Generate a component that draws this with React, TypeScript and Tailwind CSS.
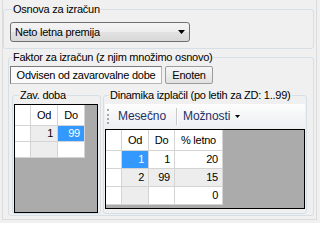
import type { ReactNode } from 'react';

type Tone = 'w' | 'g' | 's';

interface GridCell {
  v?: string;
  t: Tone;
}

const toneCls: Record<Tone, string> = {
  w: 'bg-white text-black',
  g: 'bg-[#ededed] text-black',
  s: 'bg-[#3399ff] text-white',
};

interface DataGridProps {
  size: string;
  widths: string[];
  headers: string[];
  rows: GridCell[][];
  rowH: string;
}

function DataGrid({ size, widths, headers, rows, rowH }: DataGridProps) {
  return (
    <div className={`${size} border border-black bg-[#ababab] overflow-hidden`}>
      <div className="flex h-[21px]">
        {widths.map((w, i) => (
          <div
            key={i}
            className={`${w} h-full shrink-0 flex items-center justify-center bg-white border-r border-b border-[#d4d4d4]`}
          >
            {headers[i]}
          </div>
        ))}
      </div>
      {rows.map((row, r) => (
        <div key={r} className={`flex ${rowH}`}>
          <div className={`${widths[0]} h-full shrink-0 bg-white border-r border-b border-[#d4d4d4]`} />
          {row.map((cell, i) => (
            <div
              key={i}
              className={`${widths[i + 1]} ${toneCls[cell.t]} h-full shrink-0 flex items-center justify-end pr-[4px] border-r border-b border-[#d4d4d4]`}
            >
              {cell.v}
            </div>
          ))}
        </div>
      ))}
    </div>
  );
}

function Group({ className, legend, legendCls, children }: { className: string; legend: string; legendCls: string; children: ReactNode }) {
  return (
    <fieldset className={`border border-[#d5dfe5] rounded-[3px] ${className}`}>
      <legend className={`px-[1px] ${legendCls}`}>{legend}</legend>
      {children}
    </fieldset>
  );
}

function Arrow({ w, h }: { w: number; h: number }) {
  return (
    <svg width={w} height={h} viewBox={`0 0 ${w} ${h}`} className="shrink-0">
      <polygon points={`0,0 ${w},0 ${w / 2},${h}`} fill="#000" />
    </svg>
  );
}

export default function App() {
  return (
    <div className="w-[320px] h-[223px] bg-[#f0f0f0] overflow-hidden text-[11px] leading-[13px] tracking-[-0.25px] text-black font-['Liberation_Sans',Arial,sans-serif]">
      <div className="ml-[2px] w-[315px] h-[220px] border-x border-b border-[#dcdcdc] pt-[3px]">
        <Group className="w-[311px] h-[46px] pl-[6px] pt-[6px]" legend="Osnova za izračun" legendCls="ml-[2px]">
          <div className="flex items-center justify-between w-[180px] h-[20px] rounded-[3px] border border-[#707070] pl-[4px] pr-[4px] bg-[linear-gradient(#f4f4f4_0%,#ededed_50%,#e2e2e2_50%,#d8d8d8_100%)]">
            <span>Neto letna premija</span>
            <Arrow w={7} h={4} />
          </div>
        </Group>

        <Group
          className="ml-[5px] mt-[2px] w-[306px] h-[165px] pl-[1px] pt-[2px]"
          legend="Faktor za izračun (z njim množimo osnovo)"
          legendCls="ml-[2px]"
        >
          <div className="flex gap-[3px] h-[18px]">
            <div className="w-[152px] h-full flex items-center justify-center bg-[#fbfbfb] border border-[#b5b5b5] border-t-[#7a7a7a] border-l-[#7a7a7a]">
              Odvisen od zavarovalne dobe
            </div>
            <div className="w-[48px] h-full flex items-center justify-center rounded-[2px] border border-[#9c9c9c] bg-linear-to-b from-[#f7f7f7] to-[#e1e1e1]">
              Enoten
            </div>
          </div>

          <div className="flex gap-[2px] ml-[2px] mt-[5px]">
            <Group className="w-[89px] h-[125px] pl-[1px] pr-[2px] pt-[2px]" legend="Zav. doba" legendCls="ml-[5px]">
              <DataGrid
                size="w-[84px] h-[109px]"
                widths={['w-[16px]', 'w-[27px]', 'w-[27px]']}
                headers={['', 'Od', 'Do']}
                rowH="h-[16px]"
                rows={[
                  [{ v: '1', t: 'g' }, { v: '99', t: 's' }],
                  [{ t: 'g' }, { t: 'w' }],
                ]}
              />
            </Group>

            <Group
              className="w-[204px] h-[125px] pl-[1px] pr-[1px] pt-[2px]"
              legend="Dinamika izplačil (po letih za ZD: 1..99)"
              legendCls="ml-[4px]"
            >
              <div className="flex items-center h-[25px] w-[200px] bg-linear-to-b from-[#fdfdfd] to-[#eceef1] text-[12px] tracking-[-0.1px] text-[#1f3064]">
                <div className="ml-[2px] h-[15px] w-[2px] border-l-2 border-dotted border-[#a8a8a8]" />
                <span className="ml-[9px]">Mesečno</span>
                <div className="ml-[10px] h-[17px] w-[2px] border-l border-r border-l-[#c8c8c8] border-r-white" />
                <span className="ml-[5px]">Možnosti</span>
                <span className="ml-[5px] flex">
                  <Arrow w={5} h={3} />
                </span>
              </div>
              <DataGrid
                size="w-[200px] h-[80px]"
                widths={['w-[16px]', 'w-[27px]', 'w-[26px]', 'w-[48px]']}
                headers={['', 'Od', 'Do', '% letno']}
                rowH="h-[18px]"
                rows={[
                  [{ v: '1', t: 's' }, { v: '1', t: 'w' }, { v: '20', t: 'w' }],
                  [{ v: '2', t: 'g' }, { v: '99', t: 'g' }, { v: '15', t: 'g' }],
                  [{ t: 'g' }, { t: 'w' }, { v: '0', t: 'w' }],
                ]}
              />
            </Group>
          </div>
        </Group>
      </div>
    </div>
  );
}
